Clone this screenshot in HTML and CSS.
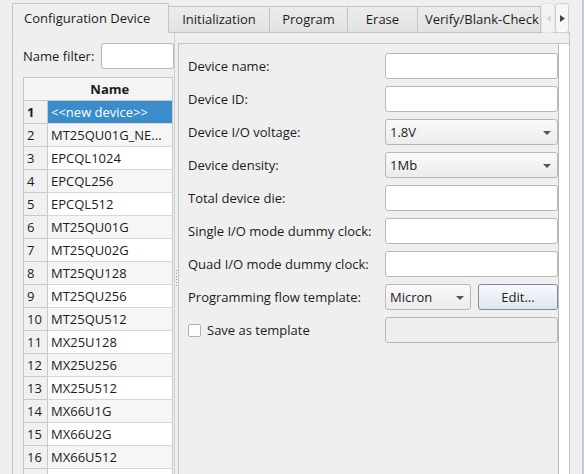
FILE: index.html
```html
<!DOCTYPE html>
<html lang="en">
<head>
    <meta charset="UTF-8">
    <title>Configuration Device</title>
    <link rel="stylesheet" href="styles.css">
</head>
<body>
    <div class="window">
        <div class="tabpane">
            <div class="tabbar">
                <div class="tab active">Configuration Device</div>
                <div class="tab w-init">Initialization</div>
                <div class="tab w-prog">Program</div>
                <div class="tab w-erase">Erase</div>
                <div class="tab w-verify"><span>Verify/Blank-Check</span></div>
                <div class="scroll-btn disabled">
                    <svg width="5" height="7" viewBox="0 0 5 7"><path d="M5 0 L0 3.5 L5 7 Z" fill="#d8d8d8"/></svg>
                </div>
                <div class="scroll-btn">
                    <svg width="5" height="7" viewBox="0 0 5 7"><path d="M0 0 L5 3.5 L0 7 Z" fill="#444"/></svg>
                </div>
            </div>
            <div class="tab-content">
                <div class="left">
                    <div class="filter">
                        <label>Name filter:</label>
                        <input class="field filter-input" type="text">
                    </div>
                    <table class="devices">
                        <thead>
                            <tr><th class="num"></th><th>Name</th></tr>
                        </thead>
                        <tbody>
                            <tr class="selected"><td class="num">1</td><td>&lt;&lt;new device&gt;&gt;</td></tr>
                            <tr><td class="num">2</td><td>MT25QU01G_NE...</td></tr>
                            <tr><td class="num">3</td><td>EPCQL1024</td></tr>
                            <tr><td class="num">4</td><td>EPCQL256</td></tr>
                            <tr><td class="num">5</td><td>EPCQL512</td></tr>
                            <tr><td class="num">6</td><td>MT25QU01G</td></tr>
                            <tr><td class="num">7</td><td>MT25QU02G</td></tr>
                            <tr><td class="num">8</td><td>MT25QU128</td></tr>
                            <tr><td class="num">9</td><td>MT25QU256</td></tr>
                            <tr><td class="num">10</td><td>MT25QU512</td></tr>
                            <tr><td class="num">11</td><td>MX25U128</td></tr>
                            <tr><td class="num">12</td><td>MX25U256</td></tr>
                            <tr><td class="num">13</td><td>MX25U512</td></tr>
                            <tr><td class="num">14</td><td>MX66U1G</td></tr>
                            <tr><td class="num">15</td><td>MX66U2G</td></tr>
                            <tr><td class="num">16</td><td>MX66U512</td></tr>
                            <tr><td class="num"></td><td></td></tr>
                        </tbody>
                    </table>
                </div>
                <div class="splitter">
                    <div class="grip"></div>
                </div>
                <div class="form-area">
                    <div class="form">
                        <div class="row">
                            <label>Device name:</label>
                            <input class="field" type="text">
                        </div>
                        <div class="row">
                            <label>Device ID:</label>
                            <input class="field" type="text">
                        </div>
                        <div class="row">
                            <label>Device I/O voltage:</label>
                            <div class="combo">1.8V<span class="arrow"></span></div>
                        </div>
                        <div class="row">
                            <label>Device density:</label>
                            <div class="combo">1Mb<span class="arrow"></span></div>
                        </div>
                        <div class="row">
                            <label>Total device die:</label>
                            <input class="field" type="text">
                        </div>
                        <div class="row">
                            <label>Single I/O mode dummy clock:</label>
                            <input class="field" type="text">
                        </div>
                        <div class="row">
                            <label>Quad I/O mode dummy clock:</label>
                            <input class="field" type="text">
                        </div>
                        <div class="row">
                            <label>Programming flow template:</label>
                            <div class="pair">
                                <div class="combo small">Micron<span class="arrow"></span></div>
                                <button class="btn">Edit...</button>
                            </div>
                        </div>
                        <div class="row">
                            <label class="check"><span class="box"></span>Save as template</label>
                            <input class="field" type="text" disabled>
                        </div>
                    </div>
                    <div class="gutter"></div>
                </div>
            </div>
        </div>
        <div class="edge"></div>
    </div>
</body>
</html>
```

FILE: styles.css
```css
* {
    margin: 0;
    padding: 0;
    box-sizing: border-box;
}

body {
    background: #efefef;
    font-family: 'Open Sans', 'Noto Sans', sans-serif;
    font-size: 13px;
    color: #1c1c1c;
    overflow: hidden;
}

.window {
    display: flex;
    height: 474px;
}

.tabpane {
    margin-left: 12px;
    width: 558px;
    display: flex;
    flex-direction: column;
}

/* tabs */
.tabbar {
    display: flex;
    align-items: flex-end;
    height: 33px;
    padding-top: 3px;
    position: relative;
    z-index: 1;
}

.tab {
    height: 27px;
    line-height: 25px;
    text-align: center;
    background: linear-gradient(#ececec, #e2e2e2);
    border: 1px solid #c4c4c4;
    border-left: none;
    white-space: nowrap;
    overflow: hidden;
}

.tab.active {
    width: 157px;
    height: 30px;
    line-height: 28px;
    text-align: left;
    padding-left: 11px;
    background: #efefef;
    border-left: 1px solid #c4c4c4;
    border-bottom-color: #efefef;
    border-radius: 2px 2px 0 0;
}

.w-init { width: 101px; }
.w-prog { width: 78px; }
.w-erase { width: 70px; }

.w-verify {
    width: 123px;
    text-align: left;
    padding-left: 7px;
}

.scroll-btn {
    width: 14px;
    height: 30px;
    align-self: flex-start;
    display: flex;
    align-items: center;
    justify-content: center;
    background: #f7f7f7;
    border: 1px solid #d0d0d0;
    border-radius: 3px;
}

.scroll-btn.disabled {
    border-color: #e6e6e6;
    background: #f3f3f3;
}

.tab-content {
    flex: 1;
    display: flex;
    border: 1px solid #c4c4c4;
    border-bottom: none;
    margin-top: -1px;
    min-height: 0;
}

/* left list */
.left {
    width: 161px;
    padding: 10px 0 0 10px;
    display: flex;
    flex-direction: column;
}

.filter {
    display: flex;
    align-items: center;
    justify-content: space-between;
    height: 26px;
    margin-bottom: 8px;
}

.field {
    display: block;
    width: 173px;
    height: 26px;
    background: #fff;
    border: 1px solid #b8b8b8;
    border-radius: 3px;
    font: inherit;
}

.field:disabled {
    background: #efefef;
}

.filter-input {
    width: 73px;
}

.devices {
    width: 150px;
    border-collapse: collapse;
    table-layout: fixed;
    background: #fff;
    border: 1px solid #c8c8c8;
}

.devices th {
    height: 23px;
    font-weight: bold;
    background: #f4f4f4;
    border-bottom: 1px solid #c8c8c8;
    text-align: center;
}

.devices th.num {
    width: 24px;
}

.devices td {
    height: 23px;
    padding: 0 0 0 3px;
    border-bottom: 1px solid #d8d8d8;
    white-space: nowrap;
    overflow: hidden;
}

.devices td.num {
    padding-left: 3px;
    background: #f0f0f0;
    border-right: 1px solid #c8c8c8;
    border-bottom-color: #c8c8c8;
}

.devices tbody tr:nth-child(even) td {
    background: #f6f6f6;
}

.devices tbody tr:nth-child(even) td.num {
    background: #f0f0f0;
}

.devices tr.selected td {
    background: #3a8ccb;
    color: #fff;
}

.devices tr.selected td.num {
    background: #f0f0f0;
    color: #1c1c1c;
    font-weight: bold;
}

/* splitter */
.splitter {
    width: 4px;
    display: flex;
    align-items: center;
    justify-content: center;
    border-left: 1px solid #d0d0d0;
}

.grip {
    width: 1px;
    height: 16px;
    background: repeating-linear-gradient(#999 0 1px, transparent 1px 3px);
    margin-top: 48px;
}

/* right form */
.form-area {
    flex: 1;
    display: flex;
    margin-top: 10px;
    border-top: 1px solid #c4c4c4;
    border-left: 1px solid #c4c4c4;
    background: #fff;
}

.form {
    width: 380px;
    background: #efefef;
    border-right: 1px solid #b8b8b8;
    padding: 9px 0 0 9px;
    display: flex;
    flex-direction: column;
    gap: 7px;
}

.gutter {
    flex: 1;
}

.row {
    display: flex;
    align-items: center;
    justify-content: space-between;
    height: 26px;
}

.combo {
    width: 173px;
    height: 26px;
    line-height: 24px;
    padding-left: 4px;
    border: 1px solid #b8b8b8;
    border-radius: 3px;
    background: linear-gradient(#fafafa, #ececec);
    position: relative;
}

.combo.small {
    width: 86px;
}

.arrow {
    position: absolute;
    right: 6px;
    top: 11px;
    border-left: 4px solid transparent;
    border-right: 4px solid transparent;
    border-top: 4px solid #555;
}

.pair {
    display: flex;
    gap: 7px;
}

.btn {
    width: 80px;
    height: 26px;
    font: inherit;
    color: inherit;
    border: 1px solid #7a8ba3;
    border-radius: 3px;
    background: linear-gradient(#f7f9fc, #dfe6ef);
}

.check {
    display: flex;
    align-items: center;
    gap: 6px;
}

.box {
    width: 13px;
    height: 13px;
    background: #fff;
    border: 1px solid #b0b0b0;
    border-radius: 2px;
}

.edge {
    flex: 1;
    border-right: 2px solid #c4cbd8;
}
```
